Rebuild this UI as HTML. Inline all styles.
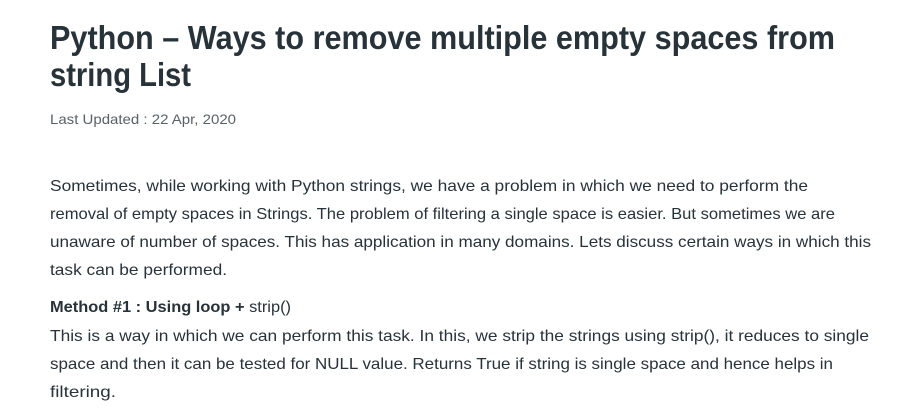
<!DOCTYPE html>
<html><head><meta charset="utf-8"><style>
html,body{margin:0;padding:0;background:#fff;width:907px;height:415px;overflow:hidden}
body{font-family:"Liberation Sans",sans-serif;color:#273239;position:relative}
.l{position:absolute;left:50px;white-space:nowrap;transform-origin:0 0}
.t{font-size:33px;font-weight:bold;color:#273239}
.d{font-size:14px;color:#5a6166}
.b{font-size:16px;color:#273239}
.h{font-size:16px;font-weight:bold}
</style></head><body>
<div class="l t" style="top:19px" w="785">Python – Ways to remove multiple empty spaces from</div>
<div class="l t" style="top:56px" w="141">string List</div>
<div class="l d" style="top:111px" w="186">Last Updated : 22 Apr, 2020</div>
<div class="l b" style="top:178px" w="758">Sometimes, while working with Python strings, we have a problem in which we need to perform the</div>
<div class="l b" style="top:206px" w="785">removal of empty spaces in Strings. The problem of filtering a single space is easier. But sometimes we are</div>
<div class="l b" style="top:234px" w="821">unaware of number of spaces. This has application in many domains. Lets discuss certain ways in which this</div>
<div class="l b" style="top:262px" w="177">task can be performed.</div>
<div class="l h" style="top:299px" w="241">Method #1 : Using loop + <span style="font-weight:normal">strip()</span></div>
<div class="l b" style="top:328px" w="819">This is a way in which we can perform this task. In this, we strip the strings using strip(), it reduces to single</div>
<div class="l b" style="top:356px" w="783">space and then it can be tested for NULL value. Returns True if string is single space and hence helps in</div>
<div class="l b" style="top:384px" w="66">filtering.</div>
<script>
document.querySelectorAll('.l').forEach(function(e){var w=+e.getAttribute('w');var r=e.getBoundingClientRect().width;if(r>0)e.style.transform='scaleX('+(w/r)+')';});
</script>
</body></html>
